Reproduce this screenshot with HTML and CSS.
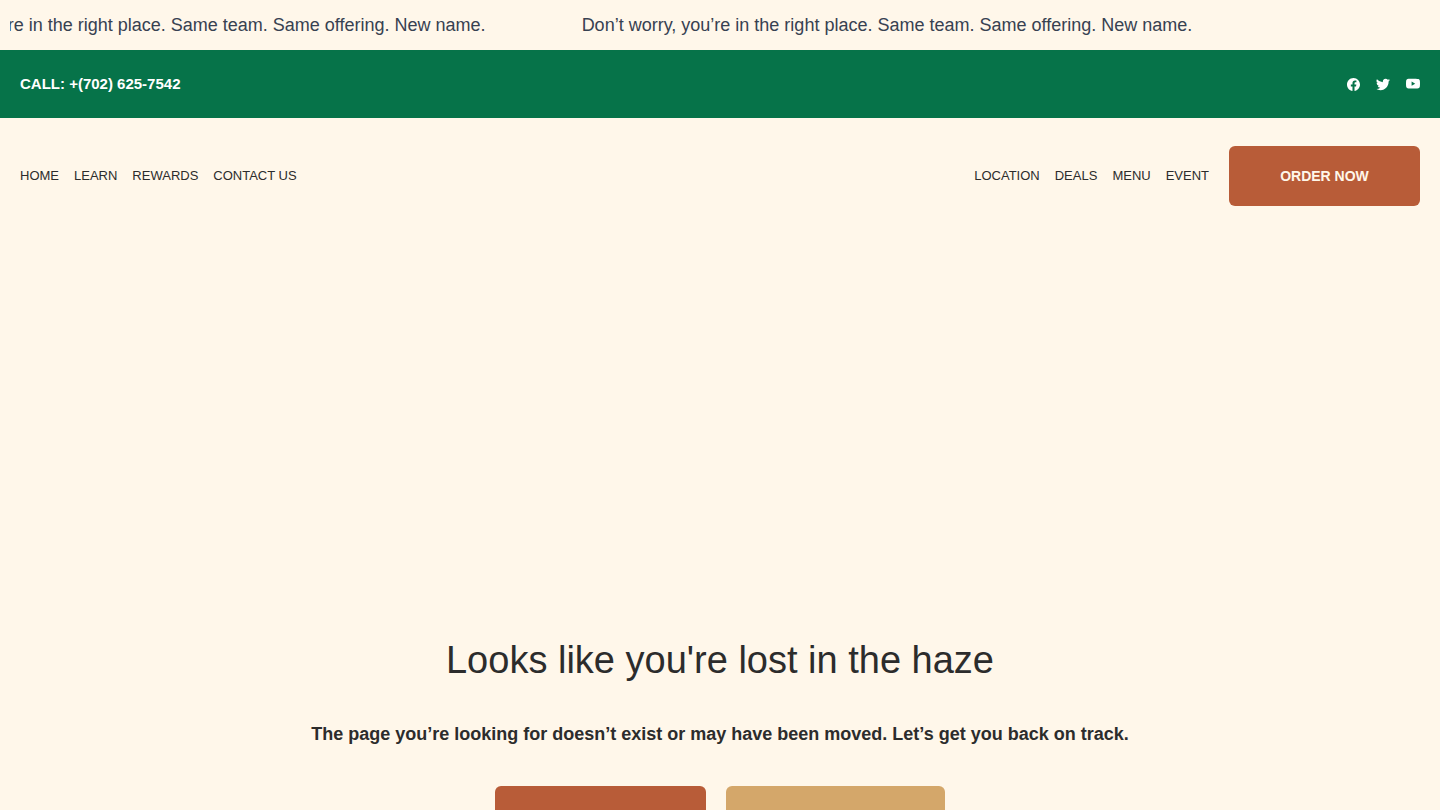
FILE: index.html
```html
<!DOCTYPE html>
<html lang="en">

<head>
    <meta charset="UTF-8">
    <title>Page not found</title>
    <link rel="stylesheet" href="styles.css">
</head>

<body>
    <div class="announcement">
        <div class="announcement-track">
            <span>Don’t worry, you’re in the right place. Same team. Same offering. New name.</span>
            <span>Don’t worry, you’re in the right place. Same team. Same offering. New name.</span>
        </div>
    </div>

    <div class="topbar">
        <span class="topbar-call">CALL: +(702) 625-7542</span>
        <div class="topbar-social">
            <svg class="icon-facebook" viewBox="0 0 16 16" aria-label="Facebook"><path d="M16 8.049c0-4.446-3.582-8.05-8-8.05C3.58 0-.002 3.603-.002 8.05c0 4.017 2.926 7.347 6.75 7.951v-5.625h-2.03V8.05H6.75V6.275c0-2.017 1.195-3.131 3.022-3.131.876 0 1.791.157 1.791.157v1.98h-1.009c-.993 0-1.303.621-1.303 1.258v1.51h2.218l-.354 2.326H9.25V16c3.824-.604 6.75-3.934 6.75-7.951z"/></svg>
            <svg viewBox="0 0 16 16" aria-label="Twitter"><path d="M5.026 15c6.038 0 9.341-5.003 9.341-9.334 0-.14 0-.282-.006-.422A6.685 6.685 0 0 0 16 3.542a6.658 6.658 0 0 1-1.889.518 3.301 3.301 0 0 0 1.447-1.817 6.533 6.533 0 0 1-2.087.793A3.286 3.286 0 0 0 7.875 6.03a9.325 9.325 0 0 1-6.767-3.429 3.289 3.289 0 0 0 1.018 4.382A3.323 3.323 0 0 1 .64 6.575v.045a3.288 3.288 0 0 0 2.632 3.218 3.203 3.203 0 0 1-.865.115 3.23 3.23 0 0 1-.614-.057 3.283 3.283 0 0 0 3.067 2.277A6.588 6.588 0 0 1 .78 13.58a6.32 6.32 0 0 1-.78-.045A9.344 9.344 0 0 0 5.026 15z"/></svg>
            <svg viewBox="0 0 16 16" aria-label="YouTube"><path d="M8.051 1.999h.089c.822.003 4.987.033 6.11.335a2.01 2.01 0 0 1 1.415 1.42c.101.38.172.883.22 1.402l.01.104.022.26.008.104c.065.914.073 1.77.074 1.957v.075c-.001.194-.01 1.108-.082 2.06l-.008.105-.009.104c-.05.572-.124 1.14-.235 1.558a2.007 2.007 0 0 1-1.415 1.42c-1.16.312-5.569.334-6.18.335h-.142c-.309 0-1.587-.006-2.927-.052l-.17-.006-.087-.004-.171-.007-.171-.007c-1.11-.049-2.167-.128-2.654-.26a2.007 2.007 0 0 1-1.415-1.419c-.111-.417-.185-.986-.235-1.558L.09 9.82l-.008-.104A31.4 31.4 0 0 1 0 7.68v-.123c.002-.215.01-.958.064-1.778l.007-.103.003-.052.008-.104.022-.26.01-.104c.048-.519.119-1.023.22-1.402a2.007 2.007 0 0 1 1.415-1.42c.487-.13 1.544-.21 2.654-.26l.17-.007.172-.006.086-.003.171-.007A99.788 99.788 0 0 1 7.858 2h.193zM6.4 5.209v4.818l4.157-2.408L6.4 5.209z"/></svg>
        </div>
    </div>

    <header class="nav">
        <nav class="nav-links">
            <a href="#">HOME</a>
            <a href="#">LEARN</a>
            <a href="#">REWARDS</a>
            <a href="#">CONTACT US</a>
        </nav>
        <nav class="nav-links nav-right">
            <a href="#">LOCATION</a>
            <a href="#">DEALS</a>
            <a href="#">MENU</a>
            <a href="#">EVENT</a>
            <a href="#" class="order-btn">ORDER NOW</a>
        </nav>
    </header>

    <main class="lost">
        <h1>Looks like you're lost in the haze</h1>
        <p>The page you’re looking for doesn’t exist or may have been moved. Let’s get you back on track.</p>
        <div class="lost-actions">
            <a href="#" class="lost-btn lost-btn-primary"></a>
            <a href="#" class="lost-btn lost-btn-secondary"></a>
        </div>
    </main>
</body>

</html>
```

FILE: styles.css
```css
html,
body {
    height: 100vh;
    overflow: hidden;
}

body {
    font-family: "Liberation Sans", Arial, sans-serif;
    margin: 0;
    padding: 0;
    background-color: #fff7ea;
    color: #2c2c2c;
}

a {
    color: inherit;
    text-decoration: none;
}

/* Announcement strip */
.announcement {
    height: 50px;
    margin: 0 10px;
    overflow: hidden;
    display: flex;
    align-items: center;
}

.announcement-track {
    display: flex;
    gap: 96px;
    margin-left: -135px;
    white-space: nowrap;
    font-size: 18px;
    color: #374151;
}

/* Green bar */
.topbar {
    height: 68px;
    padding: 0 20px;
    display: flex;
    align-items: center;
    justify-content: space-between;
    background-color: #067349;
    color: #ffffff;
}

.topbar-call {
    padding-bottom: 2px;
    font-size: 15px;
    font-weight: 700;
}

.topbar-social {
    display: flex;
    align-items: center;
    gap: 16px;
}

.topbar-social svg {
    width: 14px;
    height: 14px;
    fill: #ffffff;
}

.topbar-social .icon-facebook {
    width: 13px;
    height: 13px;
    margin: 0 0.5px;
}

/* Main nav */
.nav {
    padding: 28px 20px;
    display: flex;
    align-items: center;
    justify-content: space-between;
}

.nav-links {
    display: flex;
    align-items: center;
    gap: 15px;
    font-size: 13px;
    color: #2c2c2c;
}

.nav-links a {
    padding-bottom: 2px;
}

.nav-links .order-btn {
    width: 191px;
    height: 60px;
    padding: 0;
    margin-left: 5px;
    display: flex;
    align-items: center;
    justify-content: center;
    border-radius: 6px;
    background-color: #b85c38;
    color: #fff7ea;
    font-size: 14px;
    font-weight: 700;
}

/* 404 block */
.lost {
    padding-top: 402px;
    text-align: center;
}

.lost h1 {
    margin: 0;
    font-size: 38px;
    font-weight: 400;
    line-height: 48px;
}

.lost p {
    margin: 36px 0 0;
    font-size: 18px;
    font-weight: 700;
    line-height: 28px;
}

.lost-actions {
    margin-top: 38px;
    display: flex;
    justify-content: center;
    gap: 20px;
}

.lost-btn {
    height: 60px;
    border-radius: 6px;
}

.lost-btn-primary {
    width: 211px;
    background-color: #b85c38;
}

.lost-btn-secondary {
    width: 219px;
    background-color: #d4a76a;
}
```
